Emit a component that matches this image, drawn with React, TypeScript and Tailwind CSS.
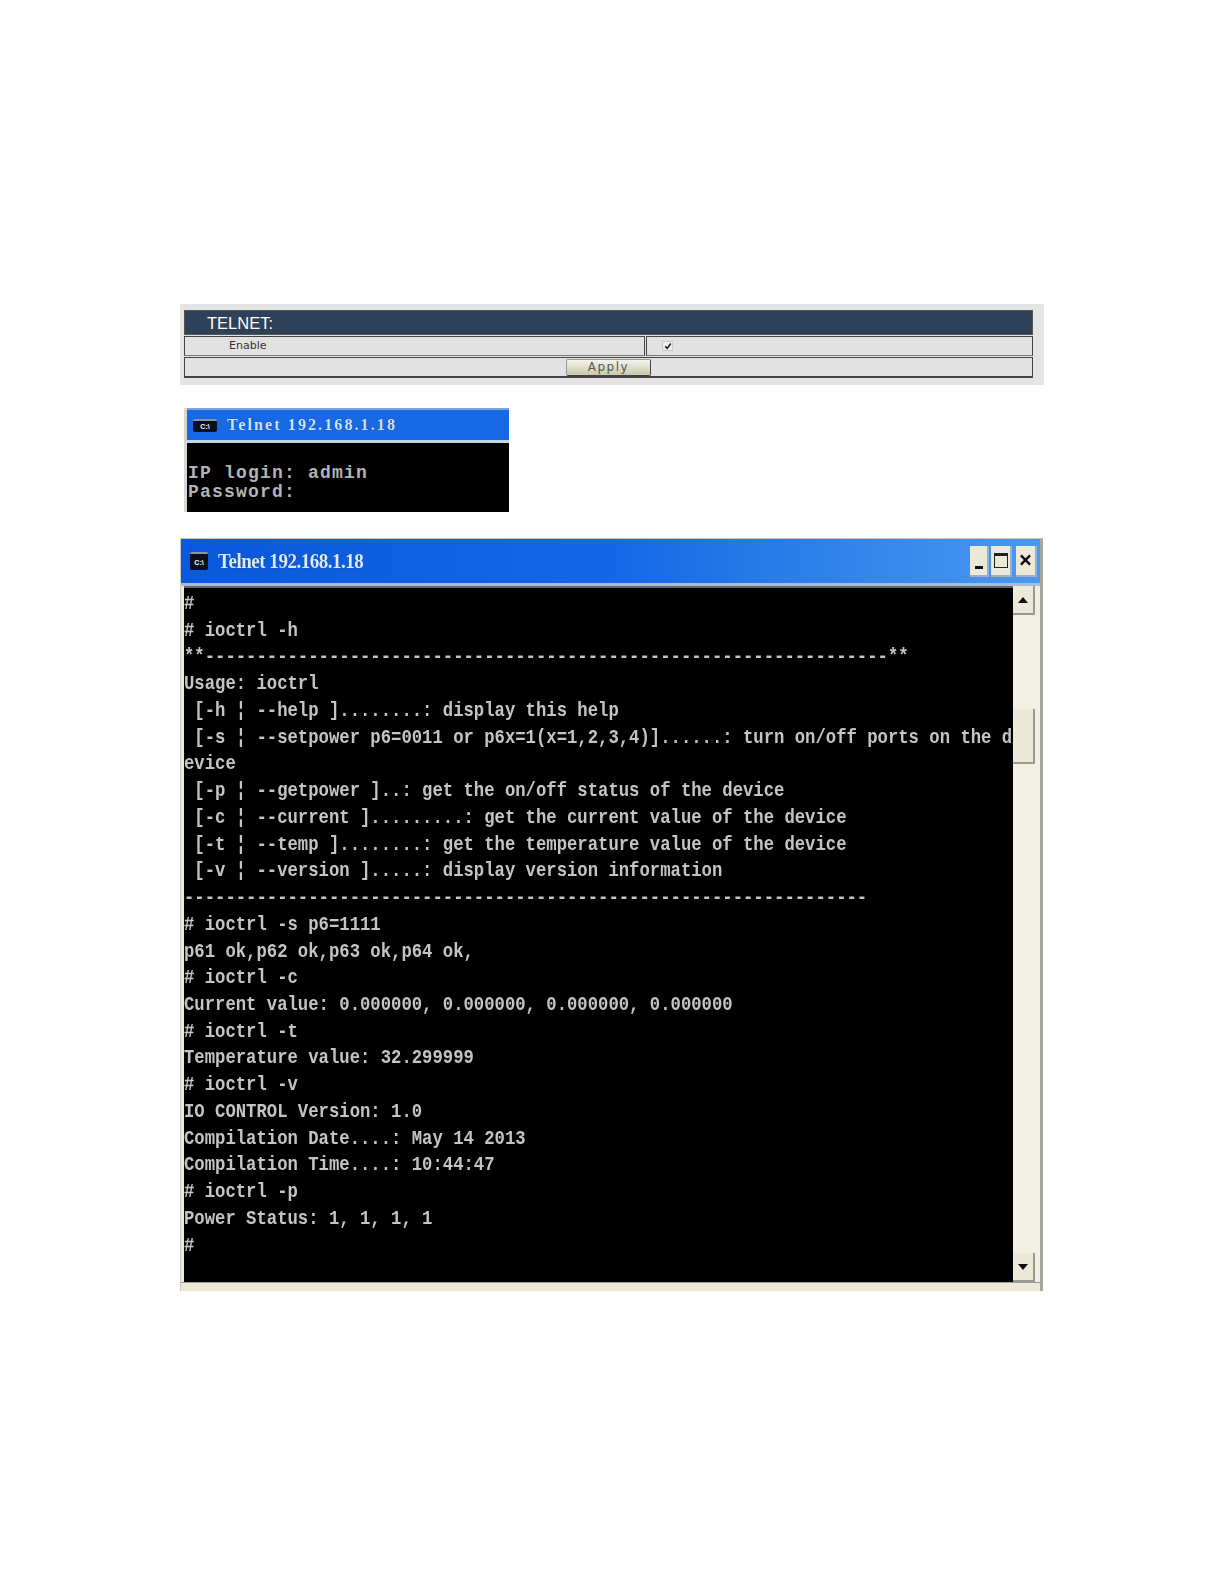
import React from 'react';

const dashes = (n: number) => '-'.repeat(n);

const lines = [
  '#',
  '# ioctrl -h',
  '**' + dashes(66) + '**',
  'Usage: ioctrl',
  ' [-h ¦ --help ]........: display this help',
  ' [-s ¦ --setpower p6=0011 or p6x=1(x=1,2,3,4)]......: turn on/off ports on the d',
  'evice',
  ' [-p ¦ --getpower ]..: get the on/off status of the device',
  ' [-c ¦ --current ].........: get the current value of the device',
  ' [-t ¦ --temp ]........: get the temperature value of the device',
  ' [-v ¦ --version ].....: display version information',
  dashes(66),
  '# ioctrl -s p6=1111',
  'p61 ok,p62 ok,p63 ok,p64 ok,',
  '# ioctrl -c',
  'Current value: 0.000000, 0.000000, 0.000000, 0.000000',
  '# ioctrl -t',
  'Temperature value: 32.299999',
  '# ioctrl -v',
  'IO CONTROL Version: 1.0',
  'Compilation Date....: May 14 2013',
  'Compilation Time....: 10:44:47',
  '# ioctrl -p',
  'Power Status: 1, 1, 1, 1',
  '#',
];

const CmdIcon = ({ className }: { className: string }) => (
  <div className={`flex items-center justify-center bg-[#0b0f1c] border-t-2 border-[#8a94a8] text-white font-['Liberation_Sans',sans-serif] font-bold leading-none ${className}`}>
    C:\
  </div>
);

const TelnetSettings = () => (
  <div className="w-[864px] h-[81px] bg-[#e4e4e4] pt-[6px] pl-[4px] flex flex-col font-['Liberation_Sans',sans-serif]">
    <div className="w-[849px] h-[25px] bg-[#2f4158] border border-[#555] pl-[22px] pt-[2px] flex items-center text-[16.5px] text-white">
      TELNET:
    </div>
    <div className="w-[849px] h-[20px] mt-[1px] flex">
      <div className="w-[461px] border border-[#444] border-b-[#777] bg-[#e2e2e2] pl-[44px] flex items-center text-[11px] text-[#333] font-['DejaVu_Sans',sans-serif]">
        Enable
      </div>
      <div className="flex-1 border border-[#444] border-b-[#777] ml-[1px] bg-[#e2e2e2] pl-[15px] flex items-center">
        <div className="w-[11px] h-[10px] bg-[#eeeeee] border border-[#c8c8c8] flex items-center justify-center">
          <svg viewBox="0 0 10 10" className="w-[8px] h-[8px]">
            <path d="M1.5 5.5 L4 8 L8.5 2" fill="none" stroke="#222" strokeWidth="2" />
          </svg>
        </div>
      </div>
    </div>
    <div className="w-[849px] h-[21px] mt-[1px] border border-b-2 border-[#444] bg-[#e2e2e2] flex items-center justify-center">
      <button className="w-[85px] h-[17px] rounded-[2px] border border-[#999] border-b-[#444] border-r-[#444] bg-gradient-to-b from-[#f4f4ec] to-[#c9caa8] text-[12px] tracking-[1.5px] text-[#555] leading-none font-['DejaVu_Sans',sans-serif]">
        Apply
      </button>
    </div>
  </div>
);

const LoginWindow = () => (
  <div className="w-[325px] h-[104px] ml-[4px] mt-[23px] flex flex-col border-l-[3px] border-[#d8d8d0]">
    <div className="h-[32px] bg-[#1769e6] border-t-2 border-[#7aa5e0] flex items-center pl-[6px]">
      <CmdIcon className="w-[24px] h-[13px] text-[7px] rounded-[2px]" />
      <span className="ml-[10px] text-[16px] font-bold text-[#cfe4ff] font-['Liberation_Serif',serif] tracking-[2.1px] [text-shadow:0_0_1px_#0a2a66]">
        Telnet 192.168.1.18
      </span>
    </div>
    <div className="h-[3px] bg-[#c8d6ea]" />
    <div className="flex-1 bg-black pt-[21px] pl-[1px] text-[18px] leading-[19px] text-[#b4b4b4] font-bold font-['Liberation_Mono',monospace] tracking-[1.2px] whitespace-pre">
      <div>IP login: admin</div>
      <div>Password:</div>
    </div>
  </div>
);

const ScrollButton = ({ up, className }: { up: boolean; className: string }) => (
  <div className={`w-[22px] bg-[#ece9d8] border-b-2 border-r-2 border-[#9a9a90] flex items-center justify-center ${className}`}>
    <svg viewBox="0 0 10 6" className="w-[10px] h-[6px]">
      <path d={up ? 'M5 0 L10 6 L0 6 Z' : 'M0 0 L10 0 L5 6 Z'} fill="#111" />
    </svg>
  </div>
);

const TitleButton = ({ children, className }: { children: React.ReactNode; className: string }) => (
  <div className={`h-[31px] bg-[#ece9d8] border-b-2 border-r-2 border-[#9ab0c8] flex justify-center ${className}`}>
    {children}
  </div>
);

const ConsoleWindow = () => (
  <div className="w-[863px] h-[753px] mt-[26px] flex flex-col bg-[#ece9d8] border-t border-l border-r-[3px] border-[#c8c8c8] border-r-[#a8a8a0]">
    <div className="h-[47px] shrink-0 border-b-[3px] border-[#a8bcd4] bg-gradient-to-r from-[#0a58dc] via-[#1467e6] to-[#4a98f0] flex items-center pl-[9px] pr-[3px]">
      <CmdIcon className="w-[18px] h-[18px] text-[7px] rounded-[2px]" />
      <span className="ml-[10px] text-[19px] inline-block scale-y-[1.15] font-bold text-[#dcebfa] font-['Liberation_Serif',serif] tracking-[-0.48px] [text-shadow:0_0_1px_#0a2a66]">
        Telnet 192.168.1.18
      </span>
      <div className="ml-auto flex gap-[2px]">
        <TitleButton className="w-[19px] items-end pb-[6px]">
          <div className="w-[8px] h-[3px] bg-[#111]" />
        </TitleButton>
        <TitleButton className="w-[21px] items-center">
          <div className="w-[14px] h-[15px] border border-t-[3px] border-[#222]" />
        </TitleButton>
        <TitleButton className="w-[21px] ml-[2px] items-center">
          <svg viewBox="0 0 12 12" className="w-[11px] h-[12px]">
            <path d="M1 1 L11 11 M11 1 L1 11" stroke="#111" strokeWidth="2.6" />
          </svg>
        </TitleButton>
      </div>
    </div>
    <div className="flex-1 flex min-h-0 pl-[3px]">
      <div className="w-[829px] bg-black pt-[3px] overflow-hidden border-t-2 border-[#666] text-[17.25px] leading-[26.74px] text-[#c4c4c4] font-bold font-['Liberation_Mono',monospace] whitespace-pre blur-[0.3px]">
        {lines.map((line, i) => (
          <div key={i} className="h-[26.74px] scale-y-[1.2]">{line}</div>
        ))}
      </div>
      <div className="w-[27px] flex flex-col bg-[#f2f0e6]">
        <ScrollButton up className="h-[29px] shrink-0" />
        <div className="h-[94px] shrink-0" />
        <div className="w-[22px] h-[55px] shrink-0 bg-[#ece9d8] border-b-2 border-r-2 border-[#9a9a90]" />
        <div className="flex-1" />
        <ScrollButton up={false} className="h-[29px] shrink-0" />
      </div>
    </div>
    <div className="h-[9px] shrink-0 bg-[#ece9d8] border-t border-[#999]" />
  </div>
);

export default function App() {
  return (
    <div className="w-[1224px] h-[1584px] bg-white pt-[304px] pl-[180px] overflow-hidden">
      <TelnetSettings />
      <LoginWindow />
      <ConsoleWindow />
    </div>
  );
}
